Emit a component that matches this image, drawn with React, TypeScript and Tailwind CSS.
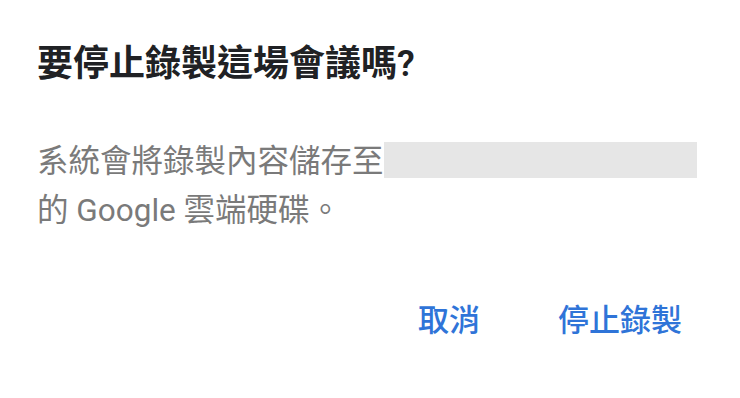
import React from "react";

export default function App() {
  return (
    <div
      className="w-[740px] h-[398px] bg-white overflow-hidden flex flex-col"
      style={{ fontFamily: "Roboto, 'Noto Sans CJK TC', sans-serif" }}
    >
      <div className="pl-[37px] pr-[40px] pt-[40px]">
        <h1 className="text-[36px] leading-[48px] font-semibold text-[#202124]">
          要停止錄製這場會議嗎?
        </h1>
        <p className="mt-[49px] text-[31.5px] leading-[49px] text-[#7a7a7a]">
          系統會將錄製內容儲存至
          <span className="inline-block w-[313px] h-[36px] bg-[#e6e6e6] align-[-6px]"></span>
          <br />
          的 Google 雲端硬碟。
        </p>
      </div>
      <div className="flex justify-end items-center gap-[78px] pr-[58px] mt-[66px]">
        <button className="text-[31px] leading-[40px] font-medium text-[#2f74d8]">取消</button>
        <button className="text-[31px] leading-[40px] font-medium text-[#2f74d8]">停止錄製</button>
      </div>
    </div>
  );
}
